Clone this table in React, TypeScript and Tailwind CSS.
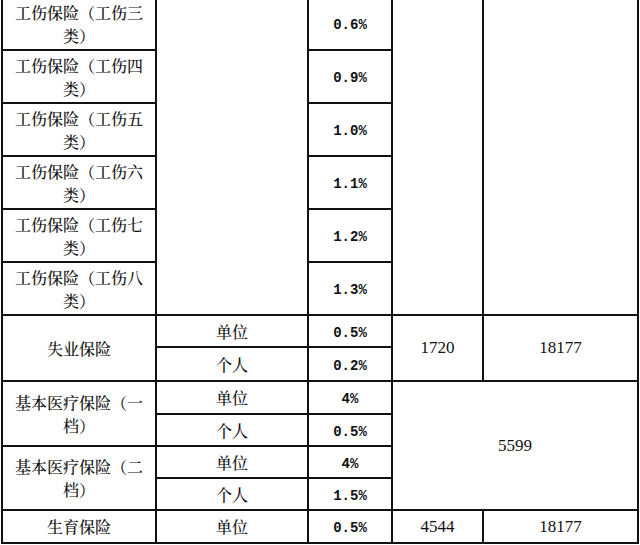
import React from "react";

const cjk = { fontFamily: '"Noto Serif CJK SC", "Noto Sans CJK SC", serif' };
const mono = { fontFamily: '"Liberation Mono", "DejaVu Sans Mono", monospace' };
const serif = { fontFamily: '"Liberation Serif", "Noto Serif CJK SC", serif' };

const cell = "border-2 border-[#111] text-center align-middle p-0";

const injury = [
  ["三", "0.6%"],
  ["四", "0.9%"],
  ["五", "1.0%"],
  ["六", "1.1%"],
  ["七", "1.2%"],
  ["八", "1.3%"],
];

function Name({ children }: { children: React.ReactNode }) {
  return (
    <div className="px-[7px] text-[16px] leading-[23px] font-medium text-[#111]" style={cjk}>
      {children}
    </div>
  );
}

function Rate({ children }: { children: React.ReactNode }) {
  return (
    <span className="text-[14px] font-bold text-[#111]" style={mono}>
      {children}
    </span>
  );
}

function Num({ children }: { children: React.ReactNode }) {
  return (
    <span className="text-[17px] text-[#111]" style={serif}>
      {children}
    </span>
  );
}

export default function App() {
  return (
    <div className="w-[640px] h-[545px] overflow-hidden bg-white">
      <table className="table-fixed border-collapse w-[636px] mt-[-4px] ml-[1px]">
        <colgroup>
          <col className="w-[154px]" />
          <col className="w-[152px]" />
          <col className="w-[84px]" />
          <col className="w-[91px]" />
          <col className="w-[155px]" />
        </colgroup>
        <tbody>
          {injury.map(([n, r], i) => (
            <tr key={n} className="h-[53px]">
              <td className={cell}>
                <Name>工伤保险（工伤{n}类）</Name>
              </td>
              {i === 0 && <td className={cell} rowSpan={6}></td>}
              <td className={cell}>
                <Rate>{r}</Rate>
              </td>
              {i === 0 && <td className={cell} rowSpan={6}></td>}
              {i === 0 && <td className={cell} rowSpan={6}></td>}
            </tr>
          ))}
          <tr className="h-[32px]">
            <td className={cell} rowSpan={2}>
              <Name>失业保险</Name>
            </td>
            <td className={cell}>
              <Name>单位</Name>
            </td>
            <td className={cell}>
              <Rate>0.5%</Rate>
            </td>
            <td className={cell} rowSpan={2}>
              <Num>1720</Num>
            </td>
            <td className={cell} rowSpan={2}>
              <Num>18177</Num>
            </td>
          </tr>
          <tr className="h-[34px]">
            <td className={cell}>
              <Name>个人</Name>
            </td>
            <td className={cell}>
              <Rate>0.2%</Rate>
            </td>
          </tr>
          <tr className="h-[33px]">
            <td className={cell} rowSpan={2}>
              <Name>基本医疗保险（一档）</Name>
            </td>
            <td className={cell}>
              <Name>单位</Name>
            </td>
            <td className={cell}>
              <Rate>4%</Rate>
            </td>
            <td className={cell} rowSpan={4} colSpan={2}>
              <Num>5599</Num>
            </td>
          </tr>
          <tr className="h-[32px]">
            <td className={cell}>
              <Name>个人</Name>
            </td>
            <td className={cell}>
              <Rate>0.5%</Rate>
            </td>
          </tr>
          <tr className="h-[32px]">
            <td className={cell} rowSpan={2}>
              <Name>基本医疗保险（二档）</Name>
            </td>
            <td className={cell}>
              <Name>单位</Name>
            </td>
            <td className={cell}>
              <Rate>4%</Rate>
            </td>
          </tr>
          <tr className="h-[32px]">
            <td className={cell}>
              <Name>个人</Name>
            </td>
            <td className={cell}>
              <Rate>1.5%</Rate>
            </td>
          </tr>
          <tr className="h-[33px]">
            <td className={cell}>
              <Name>生育保险</Name>
            </td>
            <td className={cell}>
              <Name>单位</Name>
            </td>
            <td className={cell}>
              <Rate>0.5%</Rate>
            </td>
            <td className={cell}>
              <Num>4544</Num>
            </td>
            <td className={cell}>
              <Num>18177</Num>
            </td>
          </tr>
        </tbody>
      </table>
    </div>
  );
}
